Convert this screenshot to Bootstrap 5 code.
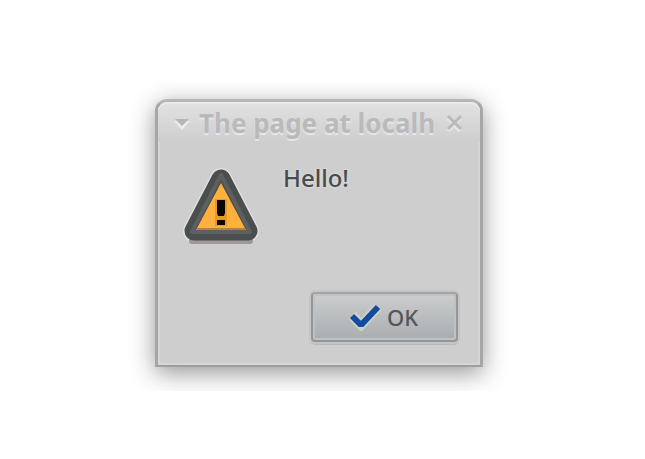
<!DOCTYPE html>
<html lang="en">
<head>
<meta charset="utf-8">
<meta name="viewport" content="width=device-width, initial-scale=1">
<title>Alert dialog</title>
<link href="https://cdn.jsdelivr.net/npm/bootstrap@5.3.0/dist/css/bootstrap.min.css" rel="stylesheet">
<style>
body { background: #fff; font-family: "Noto Sans", "Open Sans", sans-serif; color: #4a4a4c; }
.stage { padding: 99px 7px 24px 0; }
.alert-window {
  width: 100%; max-width: 328px;
  background: #cecece;
  border: 3px solid #a6a6a6; border-top-color: #b6b6b6; border-bottom: 2px solid #9e9e9e;
  border-radius: 12px 12px 0 0;
  box-shadow: inset 0 0 0 2px #d6d6d6, 0 6px 24px rgba(0,0,0,.42);
}
.title-strip {
  height: 40px; padding: 2px 16px 0 15px;
  background: linear-gradient(#e2e2e2, #cecece);
  border-radius: 9px 9px 0 0;
  box-shadow: inset 0 2px 0 #eaeaea;
}
.caption-text { font-size: 26px; line-height: 36px; font-weight: 700; color: #bababc; text-shadow: 0 2px 1px #e8e8e8; }
.plain-btn { border: 0; background: none; padding: 0; line-height: 0; }
.message-row { padding: 20px 24px 0 25px; gap: 22px; }
.message-icon { margin-top: 5px; }
.message-text { font-size: 24px; line-height: 32px; font-weight: 500; text-shadow: 0 0 3px #e4e8ec; }
.actions { padding: 45px 22px 23px; }
.ok-btn, .ok-btn:hover {
  width: 147px; height: 50px; padding: 0 2px 0 0; gap: 6px;
  border: 2px solid #949698; border-top-color: #a3a4a5; border-radius: 4px;
  background: linear-gradient(#cbcdce, #a9adaf);
  box-shadow: inset 0 0 0 2px #bec2c4, 0 0 0 2px #c5c5c5, 0 2px 0 1px #b9b9b9;
  font-size: 22px; line-height: 32px; font-weight: 500; color: #55555a;
}
</style>
</head>
<body>
<main class="stage d-flex justify-content-center">
  <section class="alert-window d-flex flex-column" role="alertdialog" aria-labelledby="caption" aria-describedby="message">
    <header class="title-strip d-flex align-items-center">
      <button type="button" class="plain-btn me-2" aria-label="Window menu">
        <svg width="18" height="16" viewBox="0 0 18 16" aria-hidden="true"><path d="M1 6h16L9 15z" fill="#ededed"/><path d="M2 4h14l-7 7z" fill="#b5b5b5"/></svg>
      </button>
      <h1 id="caption" class="caption-text mb-0 flex-grow-1 overflow-hidden text-nowrap">The page at localhost says:</h1>
      <button type="button" class="plain-btn ms-2" aria-label="Close">
        <svg width="19" height="20" viewBox="0 0 19 20" fill="none" aria-hidden="true"><path d="M3 5l12 13M15 5L3 18" stroke="#e6e6e6" stroke-width="4"/><path d="M3 3l13 13M16 3L3 16" stroke="#bababa" stroke-width="3"/></svg>
      </button>
    </header>
    <div class="message-row d-flex align-items-start">
      <svg width="78" height="80" viewBox="0 0 78 80" class="message-icon flex-shrink-0" aria-hidden="true">
        <path d="M38 12L65 64H11z" fill="none" stroke="#e0e0e0" stroke-width="22" stroke-linejoin="round"/>
        <path d="M9 74H67" stroke="#9d9999" stroke-width="6" stroke-linecap="round"/>
        <path d="M38 12L65 64H11z" fill="#454b50" stroke="#4b4e4e" stroke-width="19" stroke-linejoin="round"/>
        <path d="M38 8L67 65H9z" fill="none" stroke="#5d605e" stroke-width="4" stroke-linejoin="round"/>
        <path d="M38 16L63 63H13z" fill="#ffb13d"/>
        <path d="M14 62H62" stroke="#b4843b" stroke-width="2"/>
        <path d="M32 32h12v20H32zM32 52h12v7H32z" fill="#e89a24"/>
        <path d="M34 33h8v13l-1 3h-6l-1-3zM34 53h8v5h-8z" fill="#0a0805"/>
      </svg>
      <p id="message" class="message-text mb-0">Hello!</p>
    </div>
    <div class="actions d-flex justify-content-end">
      <button type="button" class="ok-btn btn d-flex align-items-center justify-content-center">
        <svg width="32" height="28" viewBox="0 0 32 28" fill="none" aria-hidden="true"><path d="M3 12l9 10L29 4" stroke="#cfcfc6" stroke-width="10"/><path d="M3 13l8 8h2L29 4" stroke="#134ba0" stroke-width="6"/></svg>
        <span>OK</span>
      </button>
    </div>
  </section>
</main>
<script src="https://cdn.jsdelivr.net/npm/bootstrap@5.3.0/dist/js/bootstrap.bundle.min.js"></script>
</body>
</html>
